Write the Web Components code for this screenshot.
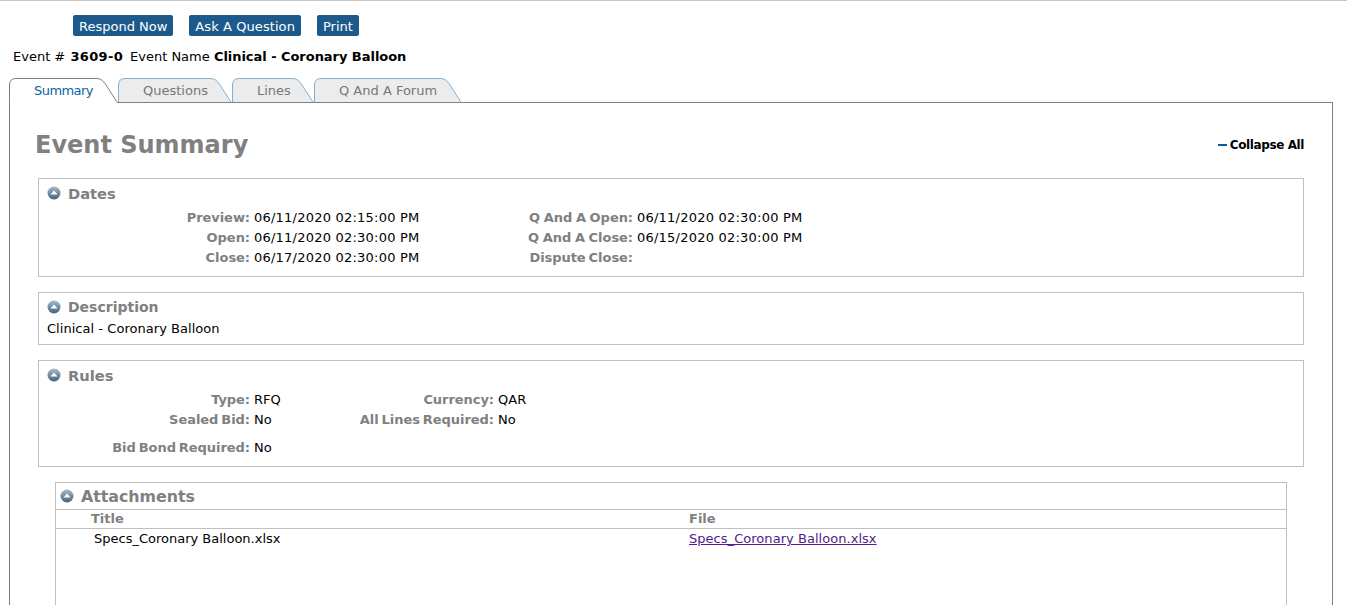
<!DOCTYPE html>
<html>
<head>
<meta charset="utf-8">
<title>Event Summary</title>
<style>
  html, body { height: 100%; overflow: hidden; }
  body {
    margin: 0;
    background: #fff;
    color: #000;
    font: 13px "DejaVu Sans", Verdana, sans-serif;
  }
</style>
</head>
<body>
<event-page></event-page>

<script>
class UiButton extends HTMLElement {
  connectedCallback() {
    this.attachShadow({ mode: 'open' });
    this.shadowRoot.innerHTML = `
      <style>
        :host { display: inline-block; }
        button {
          display: block;
          height: 21px;
          padding: 2px 6px 0;
          border: 0;
          border-radius: 2px;
          background: #1c5a8c;
          color: #fff;
          font: 13px "DejaVu Sans", Verdana, sans-serif;
          letter-spacing: var(--btn-spacing, 0);
          cursor: pointer;
        }
      </style>
      <button><slot></slot></button>
    `;
  }
}
customElements.define('ui-button', UiButton);

class TabItem extends HTMLElement {
  connectedCallback() {
    this.attachShadow({ mode: 'open' });
    const active = this.hasAttribute('active');
    const w = parseInt(this.getAttribute('width'));
    const stroke = active ? '#808080' : '#7fb2d6';
    const fill = active ? '#fff' : '#ececec';
    const end = active ? 25.5 : 24;
    const d = `M0.5 ${end} V7 Q0.5 0.5 7 0.5 H${w - 21} Q${w - 16} 0.5 ${w - 12} 7 L${w - 3} 21 Q${w - 1.5} 24 ${w} 24.5 V${end}`;
    this.shadowRoot.innerHTML = `
      <style>
        :host {
          display: block;
          position: relative;
          height: 25px;
          width: ${w}px;
        }
        svg { position: absolute; left: 0; top: 0; }
        span {
          position: relative;
          display: block;
          line-height: 25px;
          color: ${active ? '#0a64a4' : '#777'};
          padding-left: 25px;
          letter-spacing: var(--tab-spacing, 0);
        }
      </style>
      <svg width="${w}" height="26" viewBox="0 0 ${w} 26">
        <path d="${d}" fill="${fill}" stroke="${stroke}"/>
      </svg>
      <span><slot></slot></span>
    `;
  }
}
customElements.define('tab-item', TabItem);

class TabStrip extends HTMLElement {
  connectedCallback() {
    this.attachShadow({ mode: 'open' });
    this.shadowRoot.innerHTML = `
      <style>
        :host {
          display: flex;
          position: relative;
          z-index: 1;
          margin-left: 9px;
          height: 25px;
        }
      </style>
      <slot></slot>
    `;
  }
}
customElements.define('tab-strip', TabStrip);

class SectionBox extends HTMLElement {
  connectedCallback() {
    this.attachShadow({ mode: 'open' });
    this.shadowRoot.innerHTML = `
      <style>
        :host {
          display: block;
          border: 1px solid #c0c0c0;
          margin-bottom: 15px;
        }
        header {
          display: flex;
          align-items: center;
          gap: 7px;
          height: var(--head-height, 28px);
          padding: 0 0 var(--head-bottom, 1px) var(--head-left, 8px);
          color: #808080;
          font-size: var(--heading-size, 14.7px);
          font-weight: bold;
        }
        svg { display: block; }
      </style>
      <header>
        <svg width="14" height="14" viewBox="0 0 14 14">
          <defs>
            <linearGradient id="ball" x1="0" y1="0" x2="0" y2="1">
              <stop offset="0" stop-color="#a9bccb"/>
              <stop offset="0.55" stop-color="#6d8aa1"/>
              <stop offset="1" stop-color="#45647e"/>
            </linearGradient>
          </defs>
          <circle cx="7" cy="7" r="6.5" fill="url(#ball)"/>
          <path d="M3.5 8.6 L7 4.6 L10.5 8.6 Z" fill="#fff"/>
        </svg>
        <span>${this.getAttribute('heading')}</span>
      </header>
      <slot></slot>
    `;
  }
}
customElements.define('section-box', SectionBox);

class FieldGrid extends HTMLElement {
  connectedCallback() {
    this.attachShadow({ mode: 'open' });
    this.shadowRoot.innerHTML = `
      <style>
        :host {
          display: grid;
          grid-template-columns: var(--cols);
          grid-auto-rows: 20px;
          line-height: 20px;
          column-gap: 4px;
          padding-bottom: var(--bottom, 8px);
        }
      </style>
      <slot></slot>
    `;
  }
}
customElements.define('field-grid', FieldGrid);

class FieldLabel extends HTMLElement {
  connectedCallback() {
    this.attachShadow({ mode: 'open' });
    this.shadowRoot.innerHTML = `
      <style>
        :host {
          display: block;
          text-align: right;
          font-weight: bold;
          color: #808080;
          white-space: nowrap;
          letter-spacing: -0.05px;
          word-spacing: var(--label-words, -1.5px);
        }
      </style>
      <slot></slot>
    `;
  }
}
customElements.define('field-label', FieldLabel);

class AttachmentTable extends HTMLElement {
  connectedCallback() {
    this.attachShadow({ mode: 'open' });
    this.shadowRoot.innerHTML = `
      <style>
        :host { display: block; height: 140px; }
        .row {
          display: grid;
          grid-template-columns: 598px 1fr;
        }
        .head {
          border-top: 1px solid #c0c0c0;
          border-bottom: 1px solid #c0c0c0;
          height: 18px;
          line-height: 18px;
          color: #808080;
          font-weight: bold;
          padding-left: 35px;
        }
        .body {
          line-height: 18px;
          padding: 1px 0 0 38px;
        }
        .body a { color: #551a8b; margin-left: -3px; letter-spacing: 0.04px; }
      </style>
      <div class="row head"><span>Title</span><span>File</span></div>
      <div class="row body">
        <span>Specs_Coronary Balloon.xlsx</span>
        <a href="#">Specs_Coronary Balloon.xlsx</a>
      </div>
    `;
  }
}
customElements.define('attachment-table', AttachmentTable);

class EventPage extends HTMLElement {
  connectedCallback() {
    this.attachShadow({ mode: 'open' });
    this.shadowRoot.innerHTML = `
      <style>
        :host {
          display: block;
          border-top: 1px solid #c8c8c8;
        }
        .actions {
          display: flex;
          gap: 16px;
          padding: 14px 0 0 73px;
        }
        .event-line {
          display: flex;
          gap: 7px;
          margin: 13px 0 0 13px;
          line-height: 16px;
          height: 29px;
        }
        .event-num { margin-left: 1px; letter-spacing: 0.33px; }
        .event-name { letter-spacing: -0.04px; }
        .panel {
          position: relative;
          margin: -1px 14px 0 9px;
          border: 1px solid #808080;
          padding: 0 28px;
          height: 600px;
        }
        .title-row {
          display: flex;
          justify-content: space-between;
          align-items: center;
          height: 75px;
        }
        h1 {
          margin: 9px 0 0 -3px;
          font-size: 24px;
          font-weight: bold;
          color: #808080;
        }
        .collapse {
          display: flex;
          align-items: center;
          gap: 3px;
          font-weight: bold;
          font-size: 12px;
          letter-spacing: -0.4px;
          margin-top: 9px;
        }
        .collapse i {
          display: block;
          width: 9px;
          height: 2px;
          background: #0a5a9c;
        }
        .desc { margin-top: -1px; padding: 0 8px 7px; line-height: 16px; letter-spacing: 0.04px; }
        .attach {
          margin: 0 17px;
          --head-height: 26px;
          --head-bottom: 0px;
          --head-left: 4px;
          --heading-size: 15.8px;
        }
        .date { letter-spacing: 0.22px; }
        .bond { grid-row-start: 3; margin-top: 8px; }
        .qa { --label-words: -0.8px; }
      </style>

      <div class="actions">
        <ui-button>Respond Now</ui-button>
        <ui-button style="--btn-spacing: 0.08px">Ask A Question</ui-button>
        <ui-button>Print</ui-button>
      </div>

      <div class="event-line">
        <span>Event # <b class="event-num">3609-0</b></span>
        <span>Event Name <b class="event-name">Clinical - Coronary Balloon</b></span>
      </div>

      <tab-strip>
        <tab-item active width="109" style="--tab-spacing: -0.55px">Summary</tab-item>
        <tab-item width="114">Questions</tab-item>
        <tab-item width="82">Lines</tab-item>
        <tab-item width="148">Q And A Forum</tab-item>
      </tab-strip>

      <div class="panel">
        <div class="title-row">
          <h1>Event Summary</h1>
          <div class="collapse"><i></i>Collapse All</div>
        </div>

        <section-box heading="Dates">
          <field-grid style="--cols: 211px 270px 105px 1fr">
            <field-label>Preview:</field-label><span class="date">06/11/2020 02:15:00 PM</span>
            <field-label class="qa">Q And A Open:</field-label><span class="date">06/11/2020 02:30:00 PM</span>
            <field-label>Open:</field-label><span class="date">06/11/2020 02:30:00 PM</span>
            <field-label class="qa">Q And A Close:</field-label><span class="date">06/15/2020 02:30:00 PM</span>
            <field-label>Close:</field-label><span class="date">06/17/2020 02:30:00 PM</span>
            <field-label>Dispute Close:</field-label><span></span>
          </field-grid>
        </section-box>

        <section-box heading="Description" style="--heading-size: 14px">
          <div class="desc">Clinical - Coronary Balloon</div>
        </section-box>

        <section-box heading="Rules">
          <field-grid style="--cols: 211px 88px 148px 1fr; --bottom: 16px">
            <field-label>Type:</field-label><span>RFQ</span>
            <field-label>Currency:</field-label><span>QAR</span>
            <field-label>Sealed Bid:</field-label><span>No</span>
            <field-label>All Lines Required:</field-label><span>No</span>
            <field-label class="bond">Bid Bond Required:</field-label><span class="bond">No</span>
          </field-grid>
        </section-box>

        <section-box class="attach" heading="Attachments">
          <attachment-table></attachment-table>
        </section-box>
      </div>
    `;
  }
}
customElements.define('event-page', EventPage);
</script>
</body>
</html>
